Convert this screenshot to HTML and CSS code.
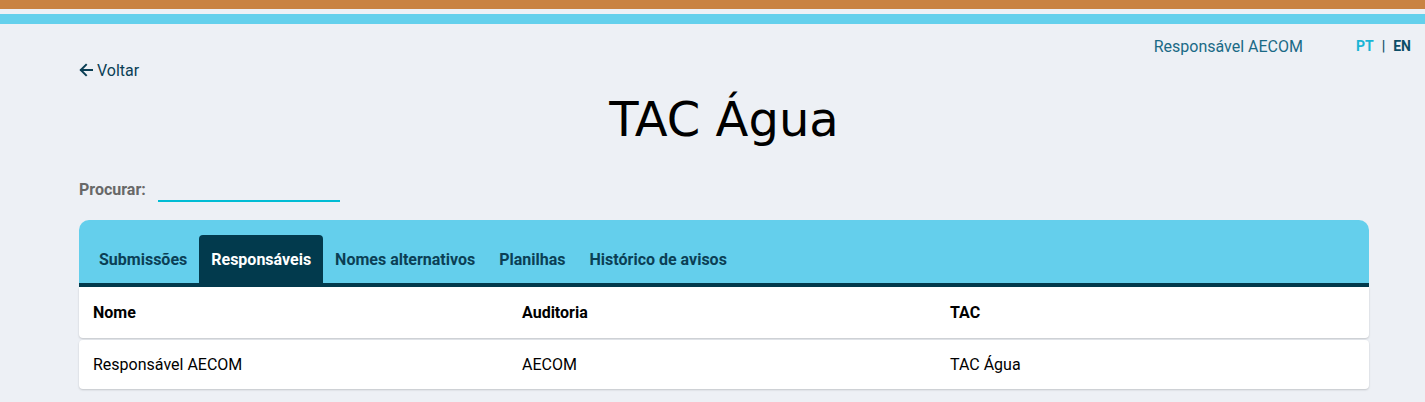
FILE: index.html
```html
<!DOCTYPE html>
<html lang="pt">
<head>
<meta charset="utf-8">
<title>TAC Água</title>
<link rel="stylesheet" href="styles.css">
</head>
<body>
<div class="bar-orange"></div>
<div class="bar-cyan"></div>
<header class="topbar">
  <span class="user">Responsável AECOM</span>
  <span class="lang"><span class="pt">PT</span><span class="sep">|</span><span class="en">EN</span></span>
</header>
<main class="container">
  <a class="back" href="#">
    <svg width="14" height="14" viewBox="0 0 14 14" aria-hidden="true"><path d="M13 7H2M7 1.8L1.8 7 7 12.2" fill="none" stroke="#0b3f55" stroke-width="2" stroke-linecap="square"/></svg>
    <span>Voltar</span>
  </a>
  <h1 class="title">TAC Água</h1>
  <div class="search">
    <label>Procurar:</label>
    <span class="search-input"></span>
  </div>
  <section class="panel">
    <nav class="tabs">
      <span class="tab">Submissões</span>
      <span class="tab active">Responsáveis</span>
      <span class="tab">Nomes alternativos</span>
      <span class="tab">Planilhas</span>
      <span class="tab">Histórico de avisos</span>
    </nav>
    <div class="table">
      <div class="row head"><span>Nome</span><span>Auditoria</span><span>TAC</span></div>
      <div class="row"><span>Responsável AECOM</span><span>AECOM</span><span>TAC Água</span></div>
    </div>
  </section>
</main>
</body>
</html>
```
FILE: styles.css
```css
html, body { margin: 0; padding: 0; }
body {
  background: #edf0f5;
  font-family: Roboto, "Liberation Sans", sans-serif;
  color: #000;
  height: 402px;
  overflow: hidden;
}
.bar-orange { height: 9px; background: #c98342; }
.bar-cyan { height: 10px; margin-top: 5px; background: #64d0ec; }
.topbar {
  display: flex;
  justify-content: flex-end;
  align-items: center;
  padding: 12px 14px 0 0;
  height: 20px;
}
.user { font-size: 16px; color: #1a6a86; margin-right: 53px; }
.lang { font-size: 14px; font-weight: 700; display: flex; gap: 0; }
.pt { color: #1ab5d5; }
.sep { color: #0b4d66; margin: 0 8px; }
.en { color: #0b4d66; }
.container { margin-left: 79px; width: 1290px; }
.back {
  display: inline-flex;
  align-items: center;
  gap: 4px;
  margin-top: 5px;
  font-size: 16px;
  color: #0b3f55;
  text-decoration: none;
  height: 18px;
}
.title {
  margin: 0;
  margin-top: 8px;
  text-align: center;
  font-family: "DejaVu Sans", sans-serif;
  font-weight: 400;
  font-size: 48px;
  line-height: 60px;
  color: #000;
}
.search {
  display: flex;
  align-items: flex-start;
  margin-top: 31px;
  height: 31px;
}
.search label {
  font-size: 16px;
  font-weight: 700;
  color: #686868;
  margin-right: 12px;
  margin-top: 0;
}
.search-input {
  display: block;
  width: 182px;
  height: 20px;
  border-bottom: 2px solid #00bcd4;
}
.panel {
  margin-top: 9px;
  background: #64cfec;
  border-radius: 10px 10px 4px 4px;
}
.tabs {
  display: flex;
  padding: 15px 8px 0;
  height: 48px;
  border-bottom: 4px solid #023a4d;
}
.tab {
  display: flex;
  align-items: center;
  padding: 0 12px;
  font-size: 16px;
  font-weight: 700;
  color: #0b3f55;
  border-radius: 4px 4px 0 0;
}
.tab.active { background: #023a4d; color: #fff; }
.table { background: #edf0f5; }
.row {
  display: grid;
  grid-template-columns: 429px 428px 1fr;
  align-items: center;
  background: #fff;
  height: 51px;
  padding-left: 14px;
  border-radius: 4px;
  box-shadow: 0 1px 2px rgba(0,0,0,0.18);
  font-size: 16px;
}
.row.head { font-weight: 700; border-radius: 0 0 4px 4px; margin-bottom: 2px; }
.row:not(.head) { height: 49px; }
```
